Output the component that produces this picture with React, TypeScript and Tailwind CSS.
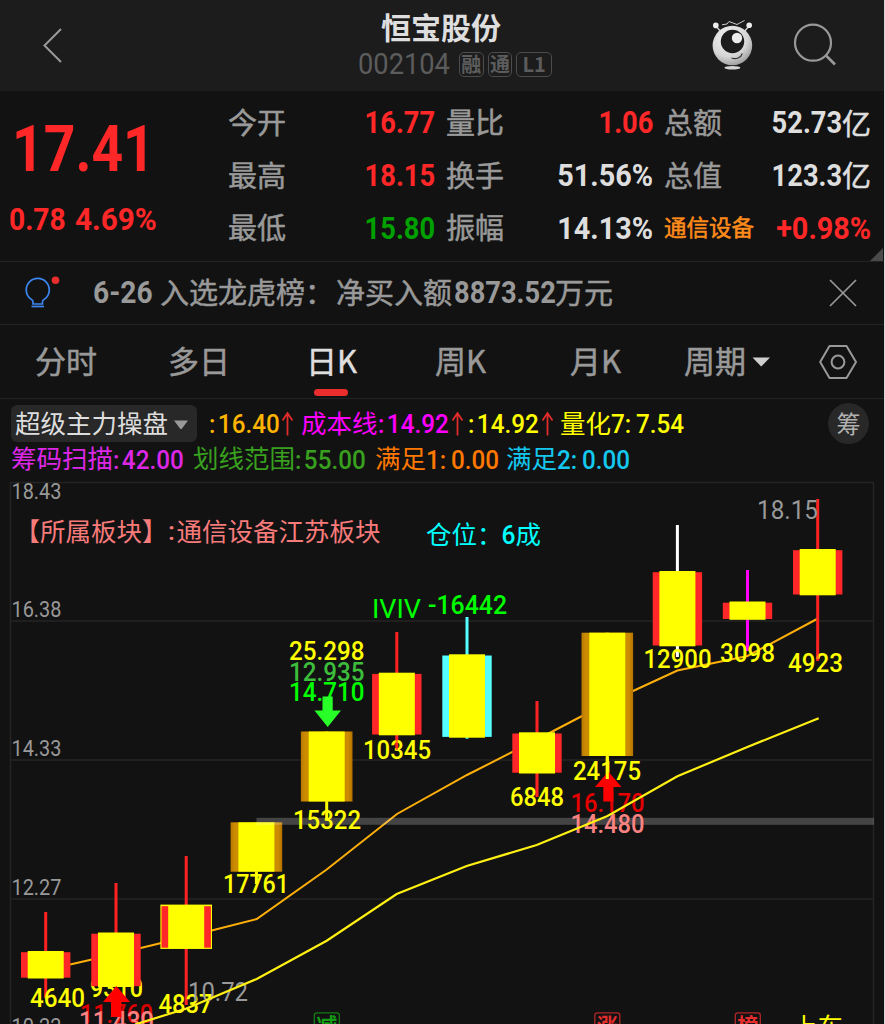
import type { ReactNode } from 'react';

const CJK = "font-['Noto_Sans_CJK_SC',sans-serif]";
const NUM = "font-['Roboto','Noto_Sans_CJK_SC',sans-serif]";
// Noto CJK has no medium cut here, so labels get a hairline outline
const MEDIUM = '[-webkit-text-stroke:0.5px_currentColor]';

type Stat = { label: string; value: string; unit?: string; color: string; small?: boolean };

const stats: Stat[] = [
  { label: '今开', value: '16.77', color: 'text-[#ff2727]' },
  { label: '量比', value: '1.06', color: 'text-[#ff2727]' },
  { label: '总额', value: '52.73', unit: '亿', color: 'text-[#dedede]' },
  { label: '最高', value: '18.15', color: 'text-[#ff2727]' },
  { label: '换手', value: '51.56%', color: 'text-[#dedede]' },
  { label: '总值', value: '123.3', unit: '亿', color: 'text-[#dedede]' },
  { label: '最低', value: '15.80', color: 'text-[#00a000]' },
  { label: '振幅', value: '14.13%', color: 'text-[#dedede]' },
  { label: '通信设备', value: '+0.98%', color: 'text-[#ff2727]', small: true },
];

const tabs = [
  { label: '分时', width: 'w-[133px]' },
  { label: '多日', width: 'w-[138px]' },
  { label: '日K', width: 'w-[129px]', active: true },
  { label: '周K', width: 'w-[135px]' },
  { label: '月K', width: 'w-[114px]' },
];

type Candle = {
  x: number;
  top: number;
  bottom: number;
  high: number;
  low: number;
  kind: 'red' | 'cyan' | 'gold' | 'outlined';
  wick: string;
};

const candles: Candle[] = [
  { x: 45.7, top: 951, bottom: 978.5, high: 912, low: 998, kind: 'red', wick: '#f22' },
  { x: 116, top: 932.5, bottom: 987, high: 883, low: 987, kind: 'red', wick: '#f22' },
  { x: 186.2, top: 905, bottom: 948.5, high: 856, low: 1005, kind: 'outlined', wick: '#f22' },
  { x: 256.4, top: 822.3, bottom: 871.7, high: 822.3, low: 884, kind: 'gold', wick: '#ff0' },
  { x: 326.7, top: 731.5, bottom: 801.5, high: 731.5, low: 819, kind: 'gold', wick: '#ff0' },
  { x: 396.8, top: 672.7, bottom: 735.3, high: 632, low: 750, kind: 'red', wick: '#f22' },
  { x: 467, top: 654.3, bottom: 737.7, high: 617, low: 738.7, kind: 'cyan', wick: '#5ff' },
  { x: 537, top: 732.3, bottom: 773.5, high: 701, low: 797, kind: 'red', wick: '#f22' },
  { x: 607.3, top: 632.7, bottom: 756, high: 632.7, low: 779, kind: 'gold', wick: '#ff0' },
  { x: 677.4, top: 571, bottom: 646.3, high: 525, low: 657, kind: 'red', wick: '#fff' },
  { x: 747.5, top: 601.5, bottom: 619.8, high: 570, low: 651, kind: 'red', wick: '#f0f' },
  { x: 817.7, top: 549, bottom: 595.3, high: 499, low: 661, kind: 'red', wick: '#f22' },
];

const Up = () => (
  <svg className="h-[25px] w-[13px]" viewBox="0 0 13 25" fill="none" stroke="#e22b2b" strokeWidth="1.8">
    <path d="M6.500 24.500V2M1.500 9.500L6.500 2L11.500 9.500" />
  </svg>
);

// Condensed figures inside a slot of a known width
const Fig = ({ w, children }: { w: number; children: ReactNode }) => (
  <span className="inline-block" style={{ width: w }}>
    <span className={`inline-block origin-left scale-x-[0.95] whitespace-nowrap font-medium ${NUM}`}>{children}</span>
  </span>
);

const Tag = ({ children, wide }: { children: ReactNode; wide?: boolean }) => (
  <span
    className={`flex h-[25px] items-center justify-center rounded-[5px] border-[1.5px] border-[#4c4c4c] text-[20px] font-bold leading-none ${wide ? 'w-[36px]' : 'w-[25px]'}`}
  >
    {children}
  </span>
);

// Chart label stretched to an exact width
const Label = ({
  x,
  y,
  w,
  fill = '#ff0',
  size = 25,
  weight = 500,
  children,
}: {
  x: number;
  y: number;
  w: number;
  fill?: string;
  size?: number;
  weight?: number;
  children: string;
}) => (
  <text x={x} y={y} textLength={w} lengthAdjust="spacingAndGlyphs" fill={fill} fontSize={size} fontWeight={weight} className={NUM}>
    {children}
  </text>
);

const CandleShape = ({ c }: { c: Candle }) => {
  const h = c.bottom - c.top;
  return (
    <g>
      <rect x={c.x - 1.5} y={c.high} width={3} height={c.low - c.high} fill={c.wick} />
      {c.kind === 'gold' && <rect x={c.x - 25.8} y={c.top} width={51.6} height={h} fill="url(#gold)" />}
      {c.kind === 'outlined' && <rect x={c.x - 25.8} y={c.top - 0.4} width={51.6} height={h + 0.8} fill="#ff0" />}
      {c.kind !== 'gold' && (
        <rect x={c.x - 24.7} y={c.top + 1.2} width={49.4} height={h - 2} fill={c.kind === 'cyan' ? '#55ffff' : '#ff2727'} />
      )}
      <rect x={c.x - 18} y={c.top} width={36} height={h} fill="#ff0" />
    </g>
  );
};

const EventTag = ({ x, color, children }: { x: number; color: string; children: string }) => (
  <g>
    <rect x={x} y={1012.8} width={25} height={25} rx={2.5} fill="none" stroke={color} strokeWidth={1.3} opacity={0.75} />
    <text x={x + 2} y={1033} fontSize={21} fontWeight={700} fill={color} className={CJK}>
      {children}
    </text>
  </g>
);

const Header = () => (
  <header className="flex h-[91px] items-start bg-[#1c1c1c]">
    <svg className="ml-[42px] mt-[27px] h-[37px] w-[22px]" viewBox="0 0 22 37" fill="none" stroke="#999" strokeWidth="2">
      <path d="M19 2L2.5 18.5L19 35" />
    </svg>
    <div className="ml-[294px] flex w-[196px] flex-col items-center">
      <h1 className="ml-[-30px] mt-[11px] text-[30px] font-bold leading-[30px] text-[#dedede]">恒宝股份</h1>
      <div className="mt-[10px] flex w-[194px] items-center gap-[4px] self-start text-[#5c5c5c]">
        <span className={`w-[97px] text-[29px] leading-[26px] ${NUM}`}>
          <span className="inline-block origin-left scale-x-[0.94]">002104</span>
        </span>
        <Tag>融</Tag>
        <Tag>通</Tag>
        <Tag wide>L1</Tag>
      </div>
    </div>
    <svg className="ml-[155px] mt-[18px] h-[54px] w-[46px]" viewBox="709 18 46 54">
      <defs>
        <radialGradient id="ball" cx="0.4" cy="0.3" r="0.8">
          <stop offset="0" stopColor="#f4f4f4" />
          <stop offset="0.6" stopColor="#d6d6d6" />
          <stop offset="1" stopColor="#8c8c8c" />
        </radialGradient>
      </defs>
      <path d="M716 26L721 32M749 26L744 32" stroke="#d0d0d0" strokeWidth="1.4" />
      <circle cx="715.8" cy="25.4" r="2.8" fill="#ededed" />
      <circle cx="749.2" cy="25.2" r="2.8" fill="#ededed" />
      <path d="M722 24.8L727 24L729 21.5L737 24.5L744.5 20.5" fill="none" stroke="#ccc" strokeWidth="1" />
      <circle cx="732.4" cy="45.5" r="19.8" fill="url(#ball)" />
      <circle cx="732.5" cy="41.5" r="11.7" fill="#1c1c1c" />
      <circle cx="737" cy="38" r="5.2" fill="#ececec" />
      <path d="M731.5 58C736 59.5 741 58 742.3 53.5" fill="none" stroke="#333" strokeWidth="1.1" />
      <ellipse cx="732.4" cy="67.8" rx="8" ry="1.8" fill="#d5d5d5" />
    </svg>
    <svg className="ml-[37px] mt-[22px] h-[46px] w-[46px]" viewBox="792 22 46 46" fill="none" stroke="#999" strokeWidth="2.2">
      <circle cx="813" cy="42.7" r="18" />
      <path d="M825.5 55L835 64.5" strokeWidth="2.6" />
    </svg>
  </header>
);

const Quote = () => (
  <section className="relative flex h-[170px]">
    <div className={`w-[228px] shrink-0 font-bold text-[#ff2727] ${NUM}`}>
      <div className="ml-[12px] mt-[26px] origin-left scale-x-[0.85] text-[65px] leading-[64px]">17.41</div>
      <div className="ml-[9px] mt-[22px] flex text-[31px] leading-[34px]">
        <span className="w-[66px] origin-left scale-x-[0.91]">0.78</span>
        <span className="origin-left scale-x-[0.96]">4.69%</span>
      </div>
    </div>
    <div className="mt-[6px] grid h-[158px] grid-cols-[207px_207px_207px] grid-rows-3 gap-x-[11px]">
      {stats.map((s) => (
        <div key={s.label} className="flex items-center justify-between">
          <span
            className={`-mt-[3px] whitespace-nowrap ${MEDIUM} ${s.small ? 'text-[22.5px] text-[#ff8c1a]' : 'text-[29px] text-[#999]'}`}
          >
            {s.label}
          </span>
          <span className={`flex items-center ${s.color}`}>
            <span
              className={`origin-right text-[31px] font-bold leading-[40px] ${NUM} ${s.value.endsWith('%') ? 'scale-x-[0.93]' : 'scale-x-[0.88]'}`}
            >
              {s.value}
            </span>
            {s.unit && <span className={`-mt-[3px] text-[29px] leading-[40px] ${MEDIUM}`}>{s.unit}</span>}
          </span>
        </div>
      ))}
    </div>
    <svg className="absolute bottom-0 right-px h-[13px] w-[13px]" viewBox="0 0 13 13">
      <path d="M13 0V13H0Z" fill="#4a4a4a" />
    </svg>
  </section>
);

const Notice = () => (
  <section className="flex h-[63px] items-center border-t border-[#232323]">
    <svg className="ml-[23px] h-[40px] w-[40px]" viewBox="23 273 40 40" fill="none">
      <path
        d="M33 304V301.5C33 300 31.5 299.500 30 298.300A11.500 11.500 0 1 1 45.500 298.300C44 299.500 42.500 300 42.500 301.500V304Z"
        stroke="#3c86f0"
        strokeWidth="1.7"
      />
      <path d="M31.500 306.500H44" stroke="#3c86f0" strokeWidth="1.7" />
      <circle cx="55.500" cy="280.300" r="3.800" fill="#eb2d2d" />
    </svg>
    <p className={`ml-[30px] flex items-center whitespace-nowrap text-[29px] text-[#999] ${MEDIUM}`}>
      <span className={`w-[67px] text-[31px] font-bold [-webkit-text-stroke:0] ${NUM}`}>
        <span className="inline-block origin-left scale-x-[0.91]">6-26</span>
      </span>
      <span className="-mt-[2px] w-[176px]">入选龙虎榜：</span>
      <span className="-mt-[2px] w-[118px]">净买入额</span>
      <span className={`w-[102px] text-[31px] font-bold [-webkit-text-stroke:0] ${NUM}`}>
        <span className="inline-block origin-left scale-x-[0.88]">8873.52</span>
      </span>
      <span className="-mt-[2px] -ml-px">万元</span>
    </p>
    <svg className="ml-auto mr-[26px] h-[30px] w-[30px]" viewBox="0 0 30 30" stroke="#999" strokeWidth="1.7">
      <path d="M2 2L28 28M28 2L2 28" />
    </svg>
  </section>
);

const Tabs = () => (
  <nav className={`flex h-[75px] border-y border-[#232323] pl-[35px] text-[31px] text-[#999] ${MEDIUM}`}>
    {tabs.map((t) => (
      <div key={t.label} className={`${t.width} flex flex-col ${t.active ? 'text-[#dedede]' : ''}`}>
        <span className="mt-[12px] leading-[46px]">{t.label}</span>
        {t.active && <span className="ml-[8px] mt-[6px] h-[7px] w-[34px] rounded-full bg-[#eb2d2d]" />}
      </div>
    ))}
    <div className="flex w-[136px] items-start">
      <span className="mt-[12px] leading-[46px]">周期</span>
      <svg className="ml-[6px] mt-[32px] h-[10px] w-[19px]" viewBox="0 0 19 10">
        <path d="M0.500 0.500H18L9.200 9.500Z" fill="#cfcfcf" />
      </svg>
    </div>
    <svg className="-ml-px mt-[19px] h-[36px] w-[38px]" viewBox="0 0 38 36" fill="none" stroke="#999" strokeWidth="2">
      <path d="M10.500 2H27.500L37 18L27.500 34H10.500L1.200 18Z" strokeLinejoin="round" />
      <circle cx="19" cy="18" r="6.400" />
    </svg>
  </nav>
);

const Indicators = () => (
  <section className="h-[81px] text-[25.5px]">
    <div className="flex h-[49px] items-center pl-[11px]">
      <div className="flex h-[37px] w-[186px] items-center rounded-[6px] bg-[#282828] pl-[4px] text-[#dedede]">
        <span className="-mt-[2px]">超级主力操盘</span>
        <svg className="ml-[5px] mt-[3px] h-[10px] w-[16px]" viewBox="0 0 16 10">
          <path d="M1 0.500H15L9 8.500Q8 9.500 7 8.500Z" fill="#999" />
        </svg>
      </div>
      <div className="ml-[12px] flex w-[92px] items-center text-[#ffb400]">
        <Fig w={72}>:&#8202;16.40</Fig>
        <Up />
      </div>
      <div className="flex w-[167px] items-center text-[#ff00ff]">
        <span className="-mt-[2px]">成本线</span>
        <Fig w={73}>:&#8202;14.92</Fig>
        <Up />
      </div>
      <div className="flex w-[92px] items-center text-[#ffff00]">
        <Fig w={73}>:&#8202;14.92</Fig>
        <Up />
      </div>
      <div className="flex items-center text-[#ffff00]">
        <span className="-mt-[2px]">量化</span>
        <Fig w={25}>7:</Fig>
        <Fig w={48}>7.54</Fig>
      </div>
      <span className="ml-auto mr-[15px] flex h-[41px] w-[41px] items-center justify-center rounded-full bg-[#282828] pb-[2px] text-[24px] text-[#b0b0b0]">
        筹
      </span>
    </div>
    <div className="flex h-[22px] items-center whitespace-nowrap pl-[11px]">
      <div className="flex w-[182px] items-center text-[#dc28e6]">
        <span className="-mt-[3px]">筹码扫描</span>
        <Fig w={72}>:&#8202;42.00</Fig>
      </div>
      <div className="flex w-[182px] items-center text-[#38a01e]">
        <span className="-mt-[3px]">划线范围</span>
        <Fig w={72}>:&#8202;55.00</Fig>
      </div>
      <div className="flex w-[131px] items-center text-[#ff7800]">
        <span className="-mt-[3px]">满足</span>
        <Fig w={25}>1:</Fig>
        <Fig w={48}>0.00</Fig>
      </div>
      <div className="flex items-center text-[#14c8f0]">
        <span className="-mt-[3px]">满足</span>
        <Fig w={25}>2:</Fig>
        <Fig w={48}>0.00</Fig>
      </div>
    </div>
  </section>
);

const Chart = () => (
  <svg className="block h-[544px] w-[884px]" viewBox="0 480 884 544">
    <defs>
      <linearGradient id="gold">
        <stop offset="0" stopColor="#b87800" />
        <stop offset="0.08" stopColor="#cc8c00" />
        <stop offset="0.92" stopColor="#cc8c00" />
        <stop offset="1" stopColor="#b47000" />
      </linearGradient>
    </defs>

    {/* Frame and grid */}
    <path d="M10.500 1024V482.500H873.500V1024M10.500 621H873.500M10.500 760H873.500M10.500 899H873.500" fill="none" stroke="#242424" strokeWidth="1.6" />

    {/* Price scale */}
    <Label x={11.5} y={499} w={50} size={21.5} weight={400} fill="#999">18.43</Label>
    <Label x={11.5} y={617} w={50} size={21.5} weight={400} fill="#999">16.38</Label>
    <Label x={11.5} y={756} w={50} size={21.5} weight={400} fill="#999">14.33</Label>
    <Label x={11.5} y={894.7} w={50} size={21.5} weight={400} fill="#999">12.27</Label>
    <Label x={11.5} y={1034} w={50} size={21.5} weight={400} fill="#999">10.22</Label>

    {/* Moving average, then candles over it */}
    <polyline
      points="46,970 116,954 186,937 256.700,919 326.700,869.500 397,814 467,775 537,739.500 607,703 677.400,670.500 747.500,656 817,619"
      fill="none"
      stroke="#ffaf0a"
      strokeWidth="2"
    />
    <Label x={90} y={996.5} w={53}>9310</Label>
    {candles.map((c) => (
      <CandleShape key={c.x} c={c} />
    ))}
    <rect x={256.500} y={817.800} width={617.500} height={7} fill="#fff" fillOpacity={0.21} />

    {/* Captions */}
    <text x={14.500} y={540.500} fontSize={25.500} fill="#f77b7b" className={CJK}>【所属板块】</text>
    <Label x={168} y={540} w={7} fill="#f77b7b">:</Label>
    <text x={176.500} y={540.500} fontSize={25.500} fill="#f77b7b" className={CJK}>通信设备江苏板块</text>
    <text x={426} y={544} fontSize={25.500} fill="#0ff" className={CJK}>仓位：</text>
    <Label x={501.500} y={544} w={14} fill="#0ff">6</Label>
    <text x={515.500} y={544} fontSize={25.500} fill="#0ff" className={CJK}>成</text>
    <Label x={372} y={618} w={49} weight={400} fill="#0f0">IVIV</Label>
    <Label x={428} y={614.3} w={79} fill="#0f0">-16442</Label>
    <Label x={757} y={519} w={61} weight={400} fill="#999">18.15</Label>

    <Label x={289} y={660} w={75.500}>25.298</Label>
    <Label x={289} y={680.5} w={75.500} fill="#3cbe3c">12.935</Label>
    <Label x={289} y={701} w={75.500} fill="#0f0">14.710</Label>

    {/* Volume figures */}
    <Label x={30} y={1006.5} w={55}>4640</Label>
    <Label x={158.500} y={1013} w={54}>4837</Label>
    <Label x={188} y={1000.5} w={60} weight={400} fill="#999">10.72</Label>
    <Label x={223} y={893} w={66}>17761</Label>
    <Label x={293} y={829} w={68}>15322</Label>
    <Label x={363} y={759} w={68}>10345</Label>
    <Label x={510} y={806} w={54}>6848</Label>
    <Label x={573} y={779.700} w={68}>24175</Label>
    <Label x={643.500} y={668} w={68}>12900</Label>
    <Label x={720} y={661.700} w={55}>3098</Label>
    <Label x={788} y={672} w={55}>4923</Label>
    <Label x={80} y={1023} w={73} fill="#dc0000">11.760</Label>
    <Label x={79} y={1030} w={75} fill="#fa8282">11.430</Label>
    <Label x={570.500} y={812} w={74} fill="#e60000">16.170</Label>
    <Label x={570.500} y={833} w={74} fill="#fa8282">14.480</Label>

    {/* Buy and sell arrows */}
    <path d="M322.500 696.500H332.700V710.500H341L327.700 727L314.500 710.500H322.500Z" fill="#28ff28" />
    <path d="M608.300 771.500L621.500 787H613.500V801.500H603.300V787H595Z" fill="#f00" />
    <path d="M116.300 986L130 1002H121.500V1017H111V1002H103Z" fill="#f00" />

    {/* Wick tips that cross the figures */}
    <path d="M607.300 757V779" stroke="#ff0" strokeWidth="3" />
    <path d="M186.200 1000V1005M396.800 736V750M537 774V797M817.700 640V661" stroke="#f22" strokeWidth="2.400" opacity="0.6" />

    <polyline
      points="135,1024.500 186.500,1008.500 256.700,979 326.700,940.700 396.700,894 466.700,866 536.700,845 607.500,816 677.400,776.300 748,746.700 818.700,718.300"
      fill="none"
      stroke="#fff014"
      strokeWidth="2.200"
    />

    {/* Event markers along the bottom */}
    <EventTag x={314.300} color="#14a014">减</EventTag>
    <EventTag x={594.800} color="#e62d2d">涨</EventTag>
    <EventTag x={735.300} color="#e62d2d">榜</EventTag>
    <text x={792} y={1035.500} fontSize={25.500} fill="#ff0" className={CJK}>上车</text>
  </svg>
);

const App = () => (
  <main className={`h-[1024px] w-[885px] overflow-hidden border-r border-[#d8d8d8] bg-[#121212] ${CJK}`}>
    <Header />
    <Quote />
    <Notice />
    <Tabs />
    <Indicators />
    <Chart />
  </main>
);

export default App;
